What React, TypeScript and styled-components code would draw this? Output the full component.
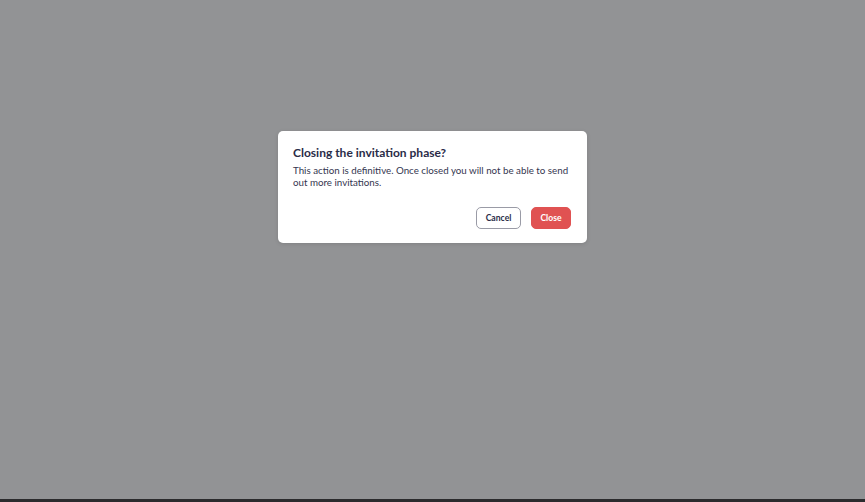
import React from 'react'
import styled, { createGlobalStyle } from 'styled-components'

const GlobalStyle = createGlobalStyle`
  html, body {
    margin: 0;
    padding: 0;
    height: 100%;
  }
  body {
    font-family: Lato, "Noto Sans", sans-serif;
    background: #2b2b2d;
    overflow: hidden;
  }
  #root {
    height: 100%;
  }
`

const Page = styled.div`
  height: 100%;
  display: flex;
  flex-direction: column;
`

const Overlay = styled.div`
  height: 499px;
  background: #929395;
  display: flex;
  justify-content: center;
  align-items: flex-start;
  padding-top: 131px;
  box-sizing: border-box;
`

// text of the page under the overlay, only its top shows
const BehindText = styled.div`
  height: 3px;
  overflow: hidden;
  padding-left: 162px;
  font-size: 18px;
  line-height: 18px;
  color: #8d8d8f;
  white-space: nowrap;
`

const Dialog = styled.div`
  width: 309px;
  background: #ffffff;
  border-radius: 5px;
  padding: 14px 16px 14px 15px;
  box-sizing: border-box;
  box-shadow: 0 1px 4px rgba(0, 0, 0, 0.12);
`

const Title = styled.h2`
  margin: 0;
  font-size: 12px;
  line-height: 16px;
  font-weight: 700;
  color: #2a2c48;
`

const Message = styled.p`
  margin: 3px 0 0;
  font-size: 9.75px;
  line-height: 12px;
  color: #34364f;
`

const Actions = styled.div`
  display: flex;
  justify-content: flex-end;
  gap: 10px;
  margin-top: 19px;
`

const Button = styled.button<{ $danger?: boolean }>`
  height: 22px;
  padding: 0 8.5px;
  border-radius: 5px;
  font-family: inherit;
  font-size: 8.6px;
  font-weight: 700;
  cursor: pointer;
  border: 1px solid ${({ $danger }) => ($danger ? '#e05252' : '#9a9ba6')};
  background: ${({ $danger }) => ($danger ? '#e05252' : '#ffffff')};
  color: ${({ $danger }) => ($danger ? '#ffffff' : '#2a2c48')};
`

export default function App() {
  return (
    <Page>
      <GlobalStyle />
      <Overlay>
        <Dialog role="dialog">
          <Title>Closing the invitation phase?</Title>
          <Message>
            This action is definitive. Once closed you will not be able to send out more invitations.
          </Message>
          <Actions>
            <Button>Cancel</Button>
            <Button $danger>Close</Button>
          </Actions>
        </Dialog>
      </Overlay>
      <BehindText>Thread participants will be notified when the invitation phase ends</BehindText>
    </Page>
  )
}
